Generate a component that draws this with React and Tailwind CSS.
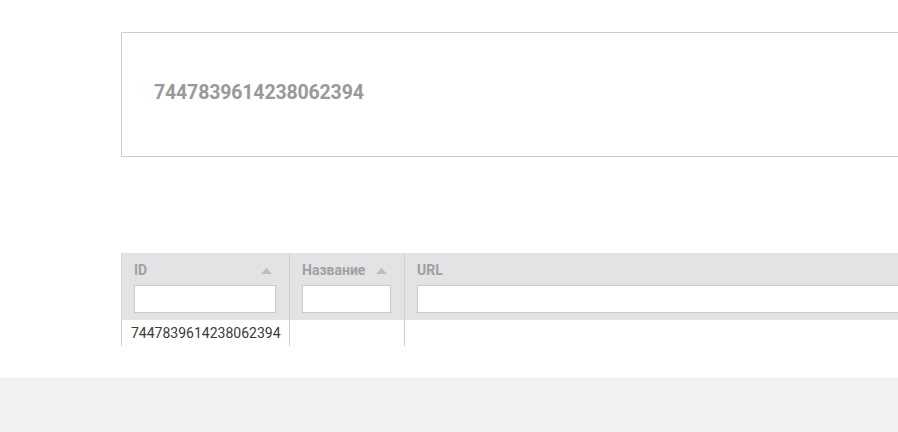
import React from 'react';

const SortArrow = () => (
  <svg width="11" height="6" viewBox="0 0 11 6" className="shrink-0">
    <path d="M0 6 L5.5 0 L11 6 Z" fill="#bcbcbc" />
  </svg>
);

const HeaderCell = ({ label, width, sortable, last }) => (
  <div
    className={`flex flex-col pt-[9px] pb-[7px] pl-[12px] ${last ? 'flex-1 pr-0' : 'pr-[13px] border-r border-[#cfd1d3]'}`}
    style={width ? { width } : undefined}
  >
    <div className={`flex items-center justify-between h-[17px] ${sortable ? 'pr-[4px]' : ''}`}>
      <span className="text-[14px] leading-[17px] font-bold text-[#a0a0a0]">{label}</span>
      {sortable && <SortArrow />}
    </div>
    <input className="mt-[6px] h-[28px] w-full bg-white border border-[#c9c9c9] outline-none" />
  </div>
);

export default function App() {
  return (
    <div className="h-[432px] overflow-hidden bg-white flex flex-col font-['Roboto',sans-serif]">
      <div className="flex-1 pl-[121px] pt-[32px]">
        {/* Summary card */}
        <div className="w-[900px] h-[125px] border border-[#cccccc] flex items-center pl-[32px] pb-[3px]">
          <span className="text-[19.5px] font-bold text-[#999999] tracking-[-0.15px]">7447839614238062394</span>
        </div>

        {/* Grid */}
        <div className="mt-[96px] w-[900px]">
          <div className="flex bg-[#e1e3e5] border-l border-[#d6d8da]">
            <HeaderCell label="ID" width={168} sortable />
            <HeaderCell label="Название" width={115} sortable />
            <HeaderCell label="URL" last />
          </div>
          <div className="flex h-[26px] border-l border-[#cccccc]">
            <div className="w-[168px] pl-[9px] border-r border-[#cccccc] text-[14px] leading-[26px] text-[#3a3a3a]">
              7447839614238062394
            </div>
            <div className="w-[115px] border-r border-[#cccccc]" />
            <div className="flex-1" />
          </div>
        </div>
      </div>

      {/* Footer */}
      <footer className="h-[54px] bg-[#f2f2f2] border-t border-[#ececec]" />
    </div>
  );
}
